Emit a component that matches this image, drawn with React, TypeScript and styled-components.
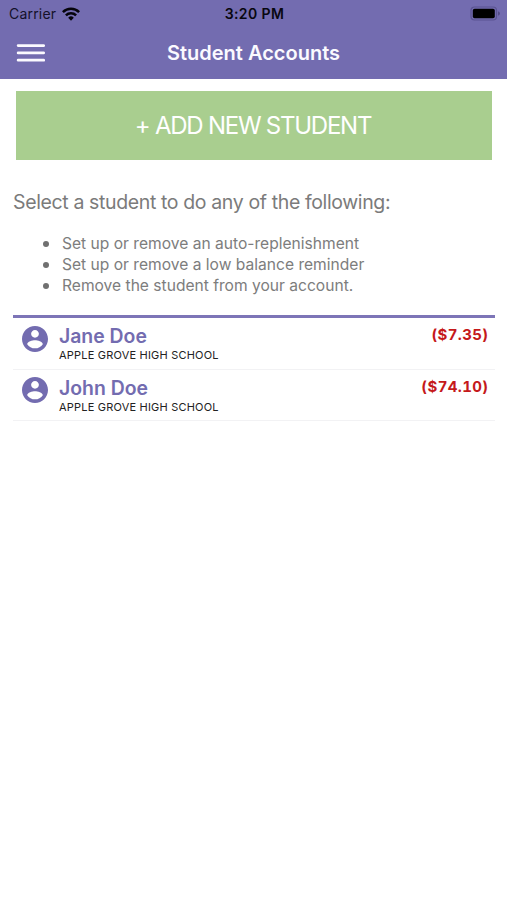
import React from "react";
import styled, { createGlobalStyle } from "styled-components";

const purple = "#736cb0";

const GlobalStyle = createGlobalStyle`
  * { box-sizing: border-box; }
  body { margin: 0; background: #fff; font-family: Inter, "Liberation Sans", sans-serif; }
`;

const Screen = styled.div`
  width: 507px;
  height: 900px;
  overflow: hidden;
  background: #fff;
`;

const Header = styled.header`
  height: 79px;
  background: ${purple};
`;

const StatusBar = styled.div`
  display: grid;
  grid-template-columns: 1fr auto 1fr;
  align-items: center;
  height: 26px;
  padding: 0 7px 0 9px;
  color: #14112a;
  font-size: 14px;
  line-height: 26px;
`;

const Carrier = styled.div`
  display: flex;
  align-items: center;
  gap: 6px;
  height: 26px;
  padding-top: 1px;
  letter-spacing: 0.2px;
`;

const Clock = styled.div`
  padding-top: 1px;
  color: #08070f;
  font-weight: 600;
  letter-spacing: 0.4px;
`;

const Battery = styled.svg`
  justify-self: end;
  display: block;
`;

const NavBar = styled.nav`
  display: grid;
  grid-template-columns: 45px 1fr 45px;
  align-items: center;
  height: 53px;
`;

const MenuButton = styled.button`
  width: 29px;
  height: 18px;
  margin: 0 0 0 16px;
  padding: 0;
  border: 0;
  background: none;

  svg {
    display: block;
  }
`;

const Title = styled.h1`
  margin: 0;
  padding-top: 1px;
  color: #fbfaff;
  font-size: 20px;
  font-weight: 600;
  line-height: 52px;
  text-align: center;
`;

const Content = styled.main`
  padding: 12px 12px 0 13px;
`;

const AddButton = styled.button`
  display: block;
  width: 476px;
  height: 69px;
  margin: 0 0 0 3px;
  padding: 1px 2px 0 0;
  border: 0;
  background: #a9ce8f;
  color: #fff;
  font-family: inherit;
  font-size: 24px;
  letter-spacing: -1.25px;
  line-height: 68px;
`;

const Prompt = styled.p`
  margin: 29px 0 0;
  color: #7b7b7b;
  font-size: 19.5px;
  letter-spacing: -0.37px;
  line-height: 27px;
`;

const Options = styled.ul`
  margin: 18px 0 0;
  padding: 0 0 0 30px;
  list-style: none;
  color: #7d7d7d;
  font-size: 15.6px;
  line-height: 20.8px;
`;

const Option = styled.li`
  display: flex;
  align-items: center;
  gap: 13px;

  &::before {
    content: "";
    width: 6px;
    height: 6px;
    border-radius: 50%;
    background: #707070;
  }
`;

const Students = styled.div`
  margin-top: 19px;
  border-top: 3px solid #7d75b7;
`;

const StudentRow = styled.div`
  display: flex;
  height: 51.5px;
  padding: 0 6.5px 0 8.5px;
  border-bottom: 1px solid #f2f2f4;
`;

const Avatar = styled.svg`
  flex: none;
  width: 26px;
  height: 26px;
  margin: 7.5px 11.5px 0 0;
`;

const Details = styled.div`
  flex: 1;
  padding-top: 6px;
`;

const Name = styled.div`
  color: ${purple};
  font-size: 19.4px;
  font-weight: 600;
  line-height: 24px;
`;

const School = styled.div`
  color: #222;
  font-size: 11px;
  letter-spacing: 0.2px;
  line-height: 15px;
`;

const Balance = styled.div`
  padding-top: 6px;
  color: #c5191b;
  font-size: 15px;
  font-variant-numeric: tabular-nums;
  font-weight: 700;
  letter-spacing: 0.35px;
  line-height: 21px;
`;

const students = [
  { name: "Jane Doe", school: "APPLE GROVE HIGH SCHOOL", balance: "($7.35)" },
  { name: "John Doe", school: "APPLE GROVE HIGH SCHOOL", balance: "($74.10)" },
];

const WifiIcon = () => (
  <svg width="18" height="14" viewBox="0 0 18 14">
    <g fill="none" stroke="#05040b" strokeWidth="2.5">
      <path d="M.9 5.2a11.5 11.5 0 0 1 16.2 0" />
      <path d="M3.9 8.4a7.2 7.2 0 0 1 10.2 0" />
    </g>
    <path d="M6.2 10.7a4 4 0 0 1 5.6 0L9 13.7z" fill="#05040b" />
  </svg>
);

const MenuIcon = () => (
  <svg width="29" height="18" viewBox="0 0 29 18">
    <path
      d="M2.1 1.6h25.6M2.1 8.9h25.6M2.1 16.2h25.6"
      stroke="#fbfaff"
      strokeWidth="2.7"
      strokeLinecap="round"
    />
  </svg>
);

export default function App() {
  return (
    <Screen>
      <GlobalStyle />
      <Header>
        <StatusBar>
          <Carrier>
            <span>Carrier</span>
            <WifiIcon />
          </Carrier>
          <Clock>3:20 PM</Clock>
          <Battery width="30" height="15" viewBox="0 0 30 15">
            <rect x="1" y="1" width="25.5" height="13" rx="3.5" fill="none" stroke="#5a5391" strokeWidth="1.2" />
            <rect x="2.8" y="2.8" width="22" height="9.4" rx="1.8" fill="#000" />
            <path d="M28 5.2q2 .8 2 2.3t-2 2.3z" fill="#544d88" />
          </Battery>
        </StatusBar>
        <NavBar>
          <MenuButton aria-label="Menu">
            <MenuIcon />
          </MenuButton>
          <Title>Student Accounts</Title>
        </NavBar>
      </Header>
      <Content>
        <AddButton>+ ADD NEW STUDENT</AddButton>
        <Prompt>Select a student to do any of the following:</Prompt>
        <Options>
          <Option>Set up or remove an auto-replenishment</Option>
          <Option>Set up or remove a low balance reminder</Option>
          <Option>Remove the student from your account.</Option>
        </Options>
        <Students>
          {students.map((s) => (
            <StudentRow key={s.name}>
              <Avatar viewBox="2 2 20 20">
                <path
                  fill={purple}
                  d="M12 2C6.48 2 2 6.48 2 12s4.48 10 10 10 10-4.48 10-10S17.52 2 12 2zm0 3c1.66 0 3 1.34 3 3s-1.34 3-3 3-3-1.34-3-3 1.34-3 3-3zm0 14.2c-2.5 0-4.71-1.28-6-3.22.03-1.99 4-3.08 6-3.08 1.99 0 5.97 1.09 6 3.08-1.29 1.94-3.5 3.22-6 3.22z"
                />
              </Avatar>
              <Details>
                <Name>{s.name}</Name>
                <School>{s.school}</School>
              </Details>
              <Balance>{s.balance}</Balance>
            </StudentRow>
          ))}
        </Students>
      </Content>
    </Screen>
  );
}
